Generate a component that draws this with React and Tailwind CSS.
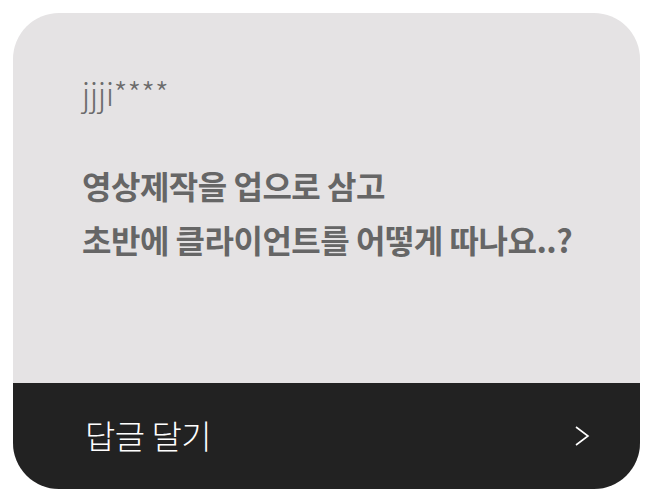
export default function App() {
  return (
    <div className="w-[650px] h-[500px] bg-white pt-[13px] pl-[13px]">
      <div
        className="w-[627px] h-[476px] rounded-[46px] overflow-hidden bg-[#e5e3e4] flex flex-col"
        style={{ fontFamily: '"Noto Sans CJK KR", "Noto Sans", sans-serif' }}
      >
        <div className="flex-1 pl-[69px] pt-[64px]">
          <p className="text-[31px] font-light leading-none text-[#6b6b6b]">jjji****</p>
          <p className="mt-[50px] text-[32px] font-bold leading-[54px] text-[#666666] tracking-[-0.5px]">
            영상제작을 업으로 삼고
            <br />
            초반에 클라이언트를 어떻게 따나요..?
          </p>
        </div>
        <div className="h-[106px] bg-[#222222] flex items-center justify-between pl-[72px] pr-[50px]">
          <span className="text-[33px] font-light text-white tracking-[-0.5px]">답글 달기</span>
          <svg width="16" height="22" viewBox="0 0 16 22" fill="none">
            <path d="M2 2 L14 11 L2 20" stroke="white" strokeWidth="1.6" />
          </svg>
        </div>
      </div>
    </div>
  );
}
